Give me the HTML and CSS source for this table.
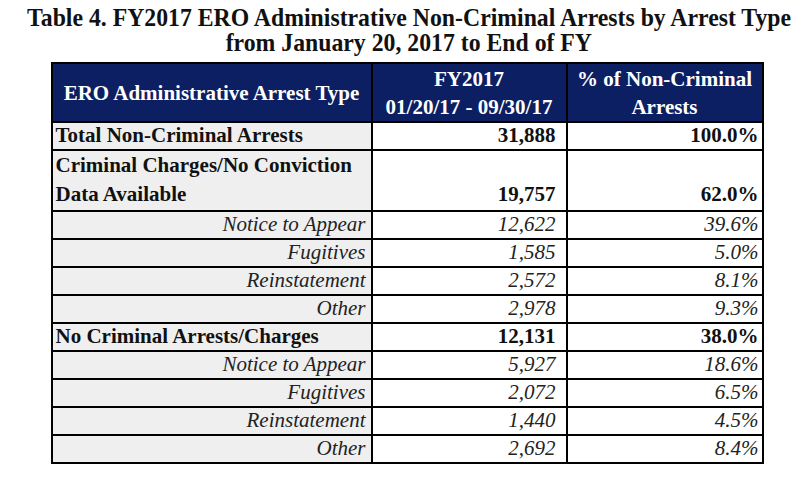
FILE: index.html
```html
<!DOCTYPE html>
<html>
<head>
<meta charset="utf-8">
<link rel="stylesheet" href="styles.css">
</head>
<body>
<div class="page">
  <h1 class="title"><span class="title-line">Table 4. FY2017 ERO Administrative Non-Criminal Arrests by Arrest Type</span><span class="title-line">from January 20, 2017 to End of FY</span></h1>
  <table class="arrests">
    <colgroup><col class="c1"><col class="c2"><col class="c3"></colgroup>
    <thead>
      <tr>
        <th>ERO Administrative Arrest Type</th>
        <th>FY2017<br>01/20/17 - 09/30/17</th>
        <th>% of Non-Criminal<br>Arrests</th>
      </tr>
    </thead>
    <tbody>
      <tr class="main">
        <td class="label">Total Non-Criminal Arrests</td>
        <td class="num">31,888</td>
        <td class="pct">100.0%</td>
      </tr>
      <tr class="main tall">
        <td class="label">Criminal Charges/No Conviction<br>Data Available</td>
        <td class="num">19,757</td>
        <td class="pct">62.0%</td>
      </tr>
      <tr class="sub">
        <td class="label">Notice to Appear</td>
        <td class="num">12,622</td>
        <td class="pct">39.6%</td>
      </tr>
      <tr class="sub">
        <td class="label">Fugitives</td>
        <td class="num">1,585</td>
        <td class="pct">5.0%</td>
      </tr>
      <tr class="sub">
        <td class="label">Reinstatement</td>
        <td class="num">2,572</td>
        <td class="pct">8.1%</td>
      </tr>
      <tr class="sub">
        <td class="label">Other</td>
        <td class="num">2,978</td>
        <td class="pct">9.3%</td>
      </tr>
      <tr class="main">
        <td class="label">No Criminal Arrests/Charges</td>
        <td class="num">12,131</td>
        <td class="pct">38.0%</td>
      </tr>
      <tr class="sub">
        <td class="label">Notice to Appear</td>
        <td class="num">5,927</td>
        <td class="pct">18.6%</td>
      </tr>
      <tr class="sub">
        <td class="label">Fugitives</td>
        <td class="num">2,072</td>
        <td class="pct">6.5%</td>
      </tr>
      <tr class="sub">
        <td class="label">Reinstatement</td>
        <td class="num">1,440</td>
        <td class="pct">4.5%</td>
      </tr>
      <tr class="sub">
        <td class="label">Other</td>
        <td class="num">2,692</td>
        <td class="pct">8.4%</td>
      </tr>
    </tbody>
  </table>
</div>
</body>
</html>
```
FILE: styles.css
```css
html, body {
  margin: 0;
  padding: 0;
  background: #ffffff;
}
.page {
  width: 812px;
  display: flex;
  flex-direction: column;
  align-items: center;
  font-family: "Liberation Serif", "Times New Roman", serif;
  color: #111;
}
.title {
  margin: 5px 0 0 0;
  font-size: 25px;
  font-weight: bold;
  line-height: 25px;
  text-align: center;
  display: flex;
  flex-direction: column;
  align-items: center;
  padding-left: 6px;
}
.title-line {
  display: block;
  white-space: nowrap;
  transform: scaleX(0.95);
}
.arrests {
  margin-top: 7px;
  margin-left: 2px;
  border-collapse: collapse;
  table-layout: fixed;
  width: 711px;
  border: 2px solid #000;
}
.c1 { width: 320px; }
.c2 { width: 195px; }
.c3 { width: 196px; }
.arrests th {
  background: #0c1f63;
  color: #fff;
  font-size: 21px;
  font-weight: bold;
  line-height: 28px;
  height: 57px;
  padding: 0 4px;
  border: 2px solid #000;
  text-align: center;
  vertical-align: middle;
}
.arrests td {
  border: 2px solid #000;
  height: 25px;
  padding: 0;
  font-size: 21px;
  line-height: 25px;
  vertical-align: bottom;
}
.arrests td.label {
  background: #efefef;
  padding: 0 5px 1px 3px;
}
.arrests td.num {
  background: #fff;
  text-align: right;
  padding: 0 10px 1px 0;
}
.arrests td.pct {
  background: #fff;
  text-align: right;
  padding: 0 3px 1px 0;
}
.main td {
  font-weight: bold;
}
.main td.label {
  text-align: left;
}
.tall td {
  height: 55px;
  line-height: 29px;
}
.sub td {
  font-style: italic;
  color: #222;
}
.sub td.label {
  text-align: right;
}
```
